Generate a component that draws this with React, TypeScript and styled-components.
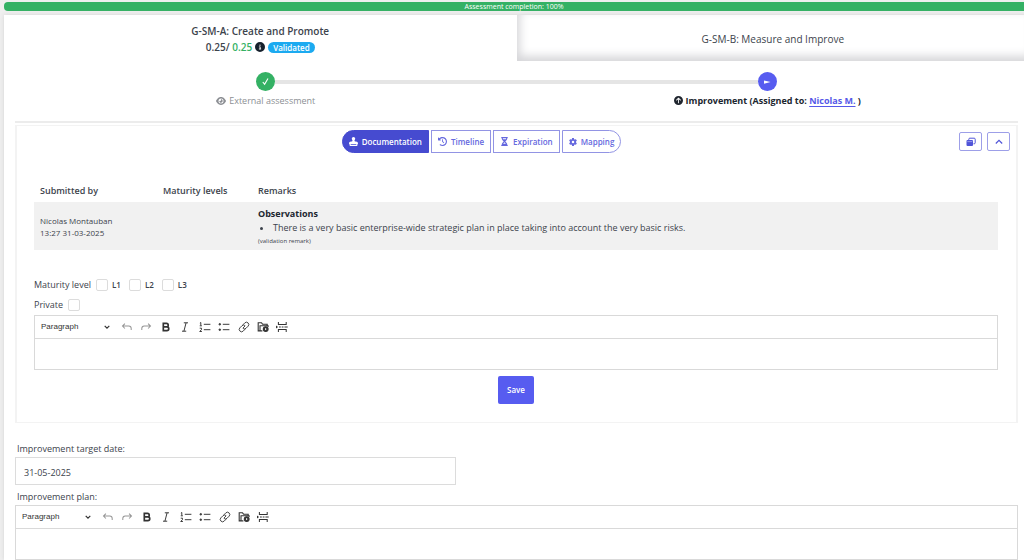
import React from "react";
import styled, { createGlobalStyle } from "styled-components";
import {
  FaStamp,
  FaClockRotateLeft,
  FaHourglassHalf,
  FaGear,
  FaEye,
  FaCircleArrowUp,
  FaCircleInfo,
} from "react-icons/fa6";

const GlobalStyle = createGlobalStyle`
  *, *::before, *::after { box-sizing: border-box; }
  body {
    margin: 0;
    background: #efefef;
    color: #3c434c;
    font: 9px/12px "Open Sans", "Noto Sans", sans-serif;
    overflow-x: hidden;
  }
  button, input, select, textarea { font: inherit; color: inherit; }
`;

const Page = styled.div`
  padding-left: 4px;
  overflow: hidden;
`;

const Progress = styled.div`
  margin: 2px 0 4px;
  height: 9px;
  border-radius: 4px 0 0 4px;
  background: #34b164;
  color: #fff;
  font-size: 7px;
  line-height: 9px;
  text-align: center;
`;

const Card = styled.main`
  margin-right: -5px;
  background: #fff;
  box-shadow: 0 0 4px #d4d4d4;
`;

const Tabs = styled.nav`
  display: grid;
  grid-template-columns: 1fr 1fr;
  height: 46px;
`;

const Tab = styled.button<{ $active?: boolean }>`
  display: flex;
  flex-direction: column;
  align-items: center;
  justify-content: center;
  gap: 2px;
  padding: 2px 0 0;
  border: 0;
  background: #fff;
  font-size: 10px;
  line-height: 14px;
  font-weight: ${(p) => (p.$active ? 600 : 400)};
  box-shadow: ${(p) => (p.$active ? "none" : "inset 3px -5px 10px #d6d6d9")};
`;

const Score = styled.span`
  display: flex;
  align-items: center;
  gap: 3px;
  svg { color: #16202c; }
`;

const Green = styled.span`
  color: #34b164;
`;

const Badge = styled.span`
  padding: 0 5px;
  border-radius: 6px;
  background: #1caaf0;
  color: #fff;
  font-size: 8px;
  line-height: 11px;
`;

const Content = styled.div`
  padding: 0 11px;
`;

const Steps = styled.ol`
  display: grid;
  grid-template-columns: 1fr 1fr;
  margin: 0;
  padding: 11px 0 14px;
  list-style: none;
  border-bottom: 2px solid #ececec;
`;

const Step = styled.li<{ $current?: boolean }>`
  display: flex;
  flex-direction: column;
  align-items: center;
  gap: 3px;
  color: ${(p) => (p.$current ? "#20262f" : "#8c8f94")};
  font-weight: ${(p) => (p.$current ? 700 : 400)};
`;

const Track = styled.div`
  display: grid;
  grid-template-columns: 1fr 19px 1fr;
  align-items: center;
  align-self: stretch;
`;

const Rail = styled.span<{ $on?: boolean }>`
  height: 4px;
  background: ${(p) => (p.$on ? "#e5e5e5" : "transparent")};
`;

const Dot = styled.span<{ $color: string }>`
  display: grid;
  place-items: center;
  height: 19px;
  border-radius: 50%;
  background: ${(p) => p.$color};
`;

const StepLabel = styled.span`
  display: flex;
  align-items: center;
  gap: 3px;
  line-height: 13px;
`;

const Link = styled.a`
  color: #5558e8;
  text-decoration: underline;
  text-underline-offset: 2px;
`;

const Panel = styled.section`
  margin: 2px 0 19px;
  padding: 4px 18px 18px 17px;
  border: 1px solid #f3f3f3;
  border-width: 1px 2px;
`;

const PanelHead = styled.div`
  display: flex;
  align-items: center;
  margin-right: -12px;
`;

const Segments = styled.div`
  flex: 1;
  display: flex;
  justify-content: center;
  gap: 2px;
`;

const Segment = styled.button<{ $active?: boolean }>`
  display: flex;
  align-items: center;
  gap: 4px;
  height: 23px;
  padding: 0 6px;
  border: 1px solid ${(p) => (p.$active ? "#464bd0" : "#9294e4")};
  background: ${(p) => (p.$active ? "#464bd0" : "#fff")};
  color: ${(p) => (p.$active ? "#fff" : "#6568de")};
  font-weight: 600;
  font-size: 8px;
  &:first-child { border-radius: 12px 0 0 12px; }
  &:last-child { border-radius: 0 12px 12px 0; }
`;

const Actions = styled.div`
  display: flex;
  gap: 5px;
  margin-left: 30px;
`;

const ActionButton = styled.button`
  display: grid;
  place-items: center;
  width: 23px;
  height: 19px;
  padding: 0;
  border: 1px solid #9d9fe8;
  border-radius: 2px;
  background: #fff;
  color: #5054d8;
`;

const Table = styled.table`
  width: 100%;
  margin-top: 26px;
  border-collapse: collapse;
  text-align: left;
  th {
    height: 23px;
    padding: 0 6px;
    font-weight: 600;
  }
  td {
    height: 48px;
    padding: 1px 6px 0;
    background: #f1f1f1;
    font-size: 8px;
  }
  th:nth-child(1) { width: 123px; }
  th:nth-child(2) { width: 95px; }
`;

const Remark = styled.div`
  font-size: 9px;
  line-height: 14px;
  strong { color: #20262f; }
  ul { margin: 0; padding-left: 15px; }
  small {
    display: block;
    font-size: 6px;
    line-height: 12px;
  }
`;

const Options = styled.fieldset`
  display: flex;
  align-items: center;
  gap: 5px;
  height: 20px;
  margin: 0;
  padding: 0;
  border: 0;
`;

const FirstOptions = styled(Options)`
  margin-top: 25px;
`;

const Levels = styled.div`
  display: flex;
  gap: 8px;
`;

const Check = styled.label<{ $plain?: boolean }>`
  display: flex;
  align-items: center;
  gap: ${(p) => (p.$plain ? 5 : 4)}px;
  font-size: ${(p) => (p.$plain ? 9 : 8)}px;
  font-weight: ${(p) => (p.$plain ? 400 : 600)};
`;

const CheckBox = styled.input.attrs({ type: "checkbox" })`
  appearance: none;
  width: 12px;
  height: 12px;
  margin: 0;
  border: 1px solid #dcdcdc;
  border-radius: 2px;
  background: #fff;
`;

const EditorFrame = styled.div`
  border: 1px solid #d9d9d9;
`;

const Toolbar = styled.div`
  display: flex;
  align-items: center;
  gap: 1px;
  height: 23px;
  border-bottom: 1px solid #d9d9d9;
`;

const Heading = styled.div`
  display: grid;
  grid-template-columns: 1fr 8px;
  align-items: center;
  width: 77px;
  margin-right: 4px;
  padding-left: 6px;
  svg { grid-area: 1 / 2; pointer-events: none; }
`;

const HeadingSelect = styled.select`
  grid-area: 1 / 1 / 2 / 3;
  appearance: none;
  padding: 0;
  border: 0;
  background: none;
  color: #333;
  font: 8px/12px "Liberation Sans", Arial, sans-serif;
`;

const Group = styled.div`
  display: flex;
`;

const Tool = styled.button<{ $muted?: boolean }>`
  display: grid;
  place-items: center;
  width: 19px;
  height: 19px;
  padding: 0;
  border: 0;
  background: none;
  color: ${(p) => (p.$muted ? "#969696" : "#333")};
`;

const Writing = styled.textarea`
  display: block;
  width: 100%;
  height: 30px;
  padding: 6px;
  border: 0;
  resize: none;
  background: #fff;
`;

const Save = styled.button`
  display: block;
  height: 28px;
  margin: 6px auto 0;
  padding: 0 9px;
  border: 0;
  border-radius: 2px;
  background: #575cf0;
  color: #fff;
  font-size: 8px;
  font-weight: 600;
`;

const FieldLabel = styled.label`
  display: block;
  padding: 0 2px;
  line-height: 13px;
`;

const DateInput = styled.input`
  display: block;
  width: 44%;
  height: 28px;
  margin: 2px 0 5px;
  padding: 2px 8px 0;
  border: 1px solid #dcdcdc;
  background: #fff;
`;

const Fields = styled.div`
  ${FieldLabel} + ${EditorFrame} { margin-top: 2px; }
`;

const Glyph = ({ children, w = 1.4 }: { children: React.ReactNode; w?: number }) => (
  <svg width="12" height="12" viewBox="0 0 20 20" fill="none" stroke="currentColor" strokeWidth={w}>
    {children}
  </svg>
);

const groups: { name: string; muted?: boolean; icon: React.ReactNode }[][] = [
  [
    { name: "Undo", muted: true, icon: <Glyph w={1.7}><path d="M6.5 4.5 2.5 8.5l4 4M2.5 8.5H13a4 4 0 0 1 4 4v2.5" /></Glyph> },
    { name: "Redo", muted: true, icon: <Glyph w={1.7}><path d="m13.5 4.5 4 4-4 4M17.5 8.5H7a4 4 0 0 0-4 4v2.5" /></Glyph> },
  ],
  [
    { name: "Bold", icon: <Glyph w={2.8}><path d="M5.5 4h5.3a2.8 2.8 0 0 1 0 5.8H5.5zM5.5 9.8h6a3.1 3.1 0 0 1 0 6.2h-6z" /></Glyph> },
    { name: "Italic", icon: <Glyph w={1.6}><path d="M8 3h7M5 17h7M11.8 3 8.2 17" /></Glyph> },
  ],
  [
    { name: "Numbered list", icon: <Glyph w={1.6}><path d="M8 5.5h11M8 14.5h11M1.500 3.500 3 2.500v5M1.200 8h3.600M1.200 12h3v2.200l-3 3.300h3.600" /></Glyph> },
    { name: "Bulleted list", icon: <Glyph w={1.6}><path d="M8 5.500h11M8 14.500h11" /><circle cx="3" cy="5.500" r="1.300" fill="currentColor" /><circle cx="3" cy="14.500" r="1.300" fill="currentColor" /></Glyph> },
  ],
  [
    { name: "Link", icon: <Glyph w={1.5}><path d="m8 6.500 3.500-3.500a3.900 3.900 0 0 1 5.500 5.500l-3.500 3.500a3.900 3.900 0 0 1-5 .500M12 13.500l-3.500 3.500a3.900 3.900 0 0 1-5.500-5.500L6.500 8a3.900 3.900 0 0 1 5-.500M8 12l4-4" /></Glyph> },
    { name: "File manager", icon: <Glyph w={1.8}><path d="M9 16.500H2V3h5.500l2 2.500H17V8M5 16V8h13.500v2" /><circle cx="14.500" cy="13.500" r="4" fill="currentColor" /><path d="m13.300 11.500 2.900 2-2.900 2z" fill="#fff" stroke="none" /></Glyph> },
    { name: "Page break", icon: <Glyph w={1.7}><path d="M4 1.500V6h13V1.500M4 18.500V14h13v4.500M5 10h3M9.500 10h3M14 10h5.500" /><path d="M0 7.500 3.500 10 0 12.500z" fill="currentColor" stroke="none" /></Glyph> },
  ],
];

function Editor({ id, label }: { id: string; label?: string }) {
  return (
    <EditorFrame>
      <Toolbar>
        <Heading>
          <HeadingSelect aria-label="Heading">
            <option>Paragraph</option>
          </HeadingSelect>
          <svg width="6" height="6" viewBox="0 0 6 6" fill="none" stroke="#333" strokeWidth="1.2">
            <path d="M.7 1.800 3 4.100l2.300-2.300" />
          </svg>
        </Heading>
        {groups.map((tools) => (
          <Group key={tools[0].name}>
            {tools.map((t) => (
              <Tool key={t.name} type="button" aria-label={t.name} $muted={t.muted}>
                {t.icon}
              </Tool>
            ))}
          </Group>
        ))}
      </Toolbar>
      <Writing id={id} aria-label={label} />
    </EditorFrame>
  );
}

export default function App() {
  return (
    <>
      <GlobalStyle />
      <Page>
        <Progress>Assessment completion: 100%</Progress>
        <Card>
          <Tabs>
            <Tab $active type="button">
              <span>G-SM-A: Create and Promote</span>
              <Score>
                <span>0.25/ <Green>0.25</Green></span>
                <FaCircleInfo size={10} />
                <Badge>Validated</Badge>
              </Score>
            </Tab>
            <Tab type="button">G-SM-B: Measure and Improve</Tab>
          </Tabs>
          <Content>
            <Steps>
              <Step>
                <Track>
                  <Rail />
                  <Dot $color="#34b164">
                    <svg width="9" height="9" viewBox="0 0 9 9" fill="none" stroke="#fff" strokeWidth="1.1">
                      <path d="M1.800 5 3.600 7.300 7 1.500" />
                    </svg>
                  </Dot>
                  <Rail $on />
                </Track>
                <StepLabel><FaEye size={10} />External assessment</StepLabel>
              </Step>
              <Step $current>
                <Track>
                  <Rail $on />
                  <Dot $color="#575cf0">
                    <svg width="9" height="9" viewBox="0 0 9 9" fill="#fff">
                      <path d="M1 3.500 7.500 5 1 6.700z" />
                    </svg>
                  </Dot>
                  <Rail />
                </Track>
                <StepLabel>
                  <FaCircleArrowUp size={9} />
                  <span>Improvement (Assigned to: <Link href="#nicolas">Nicolas M.</Link> )</span>
                </StepLabel>
              </Step>
            </Steps>
            <Panel>
              <PanelHead>
                <Segments>
                  <Segment $active type="button"><FaStamp size={9} />Documentation</Segment>
                  <Segment type="button"><FaClockRotateLeft size={9} />Timeline</Segment>
                  <Segment type="button"><FaHourglassHalf size={9} />Expiration</Segment>
                  <Segment type="button"><FaGear size={8} />Mapping</Segment>
                </Segments>
                <Actions>
                  <ActionButton type="button" aria-label="Open in window">
                    <svg width="10" height="10" viewBox="0 0 10 10">
                      <path d="M2.800 3V2.200a1 1 0 0 1 1-1h4.400a1 1 0 0 1 1 1v3.600a1 1 0 0 1-1 1h-.700" fill="none" stroke="currentColor" />
                      <rect x=".5" y="3" width="6.500" height="6" rx="1" fill="currentColor" />
                      <path d="M1.300 4.600h5" stroke="#c5c6f4" strokeWidth=".6" />
                    </svg>
                  </ActionButton>
                  <ActionButton type="button" aria-label="Collapse">
                    <svg width="8" height="8" viewBox="0 0 8 8" fill="none" stroke="currentColor" strokeWidth="1.2">
                      <path d="M.8 5.500 4 2.300l3.200 3.200" />
                    </svg>
                  </ActionButton>
                </Actions>
              </PanelHead>
              <Table>
                <thead>
                  <tr><th>Submitted by</th><th>Maturity levels</th><th>Remarks</th></tr>
                </thead>
                <tbody>
                  <tr>
                    <td>Nicolas Montauban<br />13:27 31-03-2025</td>
                    <td />
                    <td>
                      <Remark>
                        <strong>Observations</strong>
                        <ul>
                          <li>There is a very basic enterprise-wide strategic plan in place taking into account the very basic risks.</li>
                        </ul>
                        <small>(validation remark)</small>
                      </Remark>
                    </td>
                  </tr>
                </tbody>
              </Table>
              <FirstOptions aria-label="Maturity level">
                <span>Maturity level</span>
                <Levels>
                  <Check><CheckBox />L1</Check>
                  <Check><CheckBox />L2</Check>
                  <Check><CheckBox />L3</Check>
                </Levels>
              </FirstOptions>
              <Options>
                <Check $plain>Private<CheckBox /></Check>
              </Options>
              <Editor id="remark" label="Remark" />
              <Save type="button">Save</Save>
            </Panel>
            <Fields>
              <FieldLabel htmlFor="target">Improvement target date:</FieldLabel>
              <DateInput id="target" defaultValue="31-05-2025" />
              <FieldLabel htmlFor="plan">Improvement plan:</FieldLabel>
              <Editor id="plan" />
            </Fields>
          </Content>
        </Card>
      </Page>
    </>
  );
}
